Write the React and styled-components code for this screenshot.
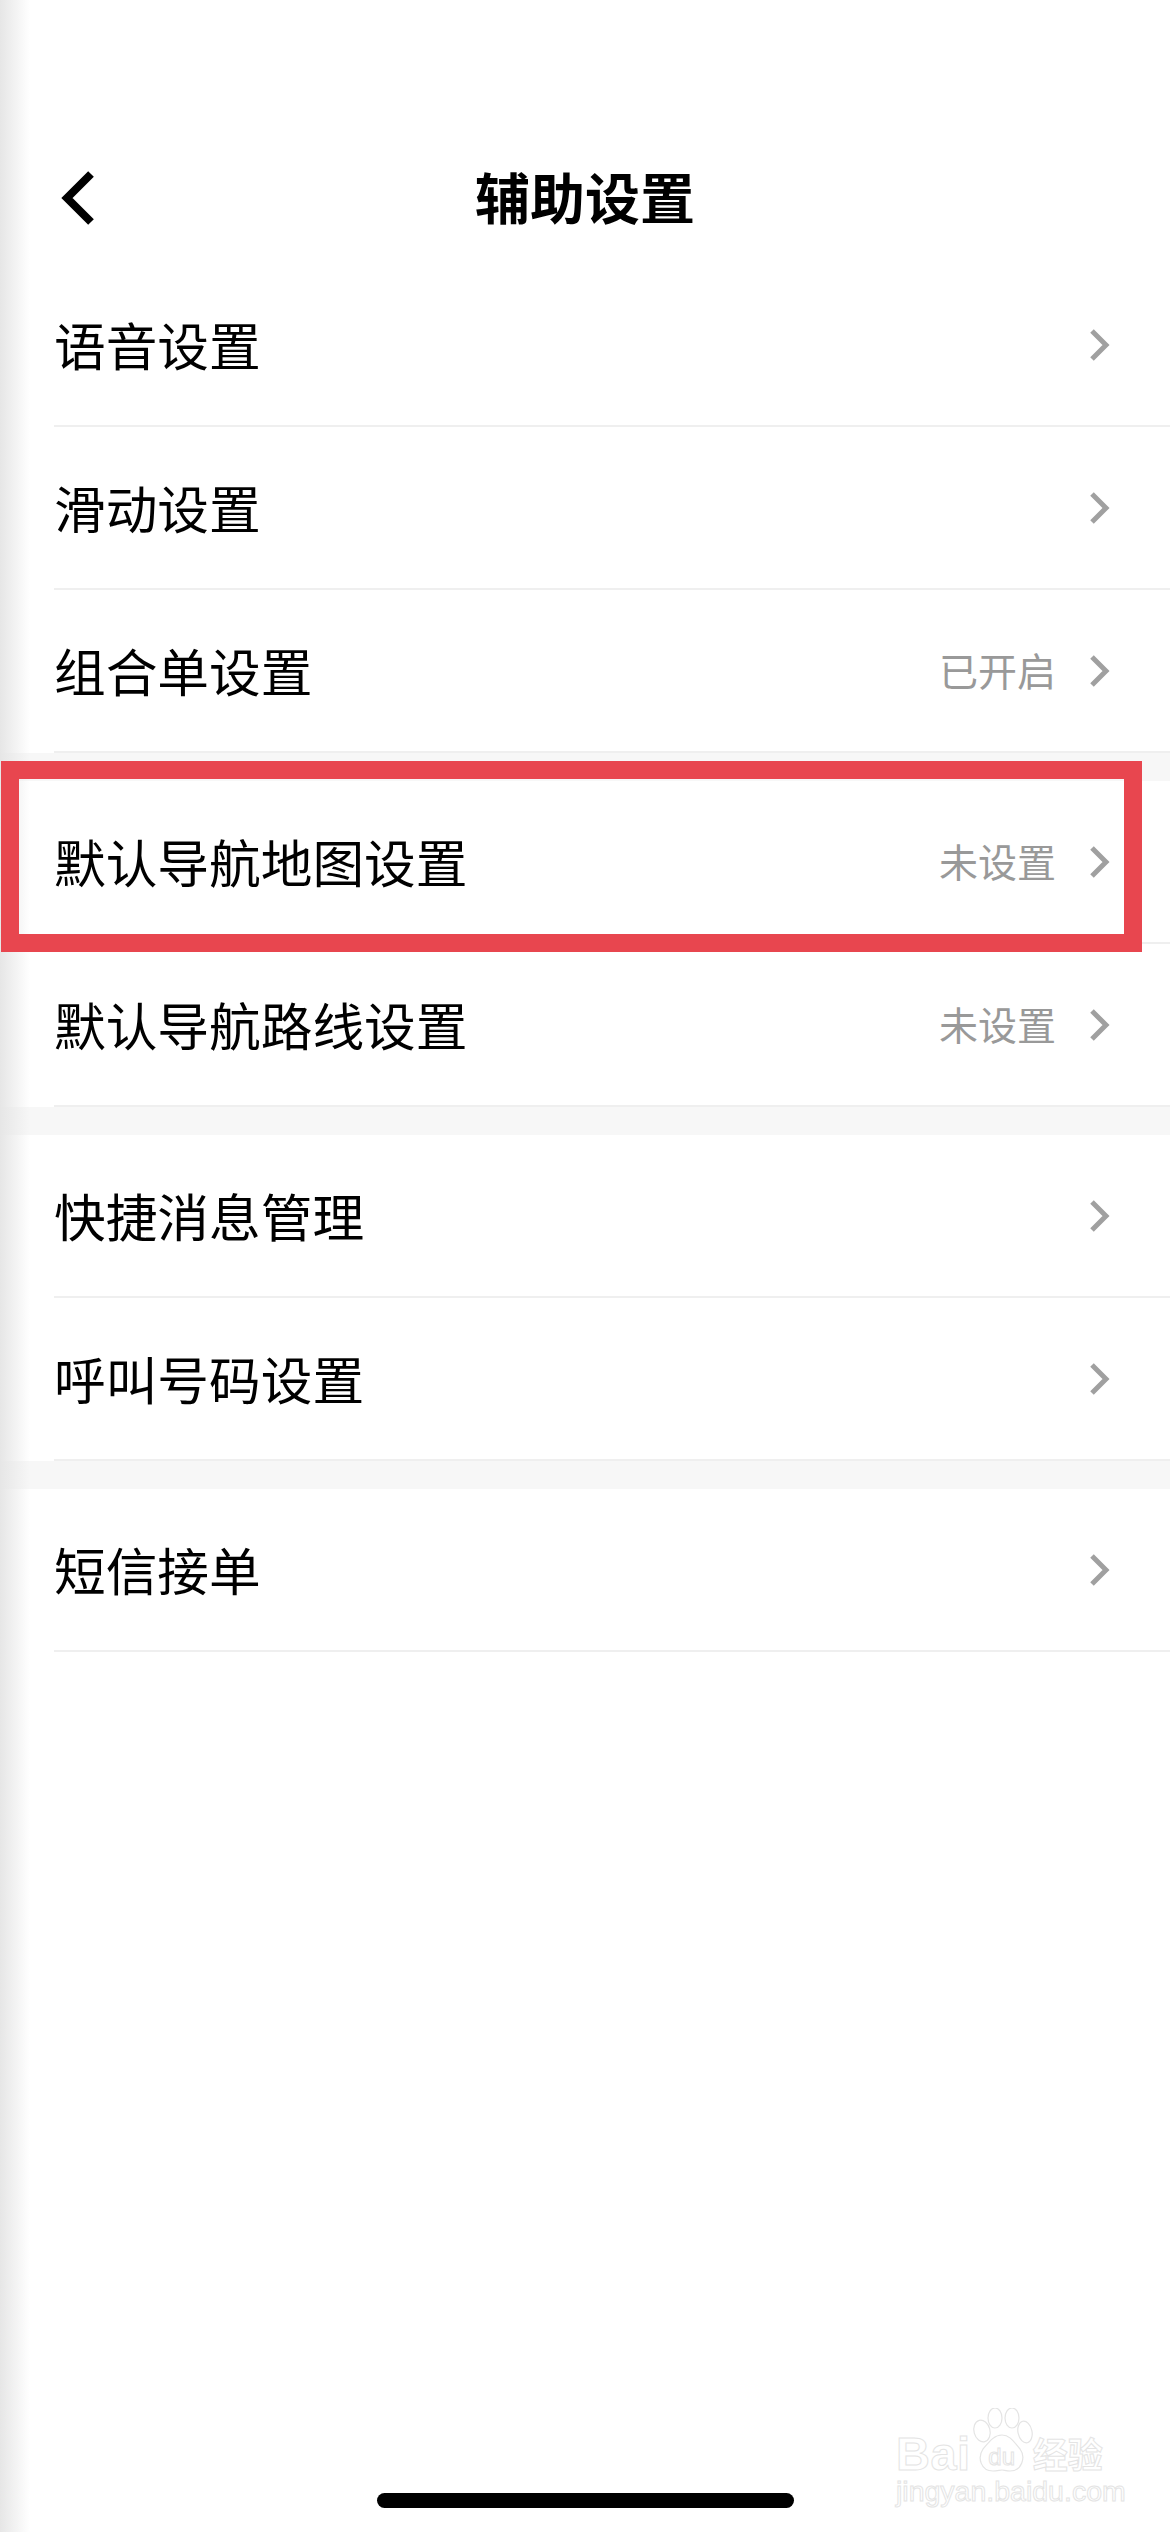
import React from 'react';
import styled, { createGlobalStyle } from 'styled-components';

const Global = createGlobalStyle`
  html, body { margin: 0; padding: 0; background: #fff; }
  body { font-family: "Noto Sans CJK SC", "Noto Sans", sans-serif; }
`;

const Page = styled.div`
  position: relative;
  width: 1170px;
  height: 2532px;
  overflow: hidden;
  background: #fff;
  display: flex;
  flex-direction: column;
`;

const Header = styled.header`
  height: 264px;
  box-sizing: border-box;
  padding-top: 162px;
  display: grid;
  grid-template-columns: 1fr auto 1fr;
  align-items: start;
`;

const BackIcon = styled.svg`
  width: 42px;
  height: 64px;
  margin: 4px 0 0 58px;
`;

const Title = styled.h1`
  margin: 0;
  font-size: 55px;
  line-height: 66px;
  font-weight: 700;
  color: #000;
`;

const List = styled.main`
  flex: 1;
`;

const Row = styled.div`
  height: 163px;
  box-sizing: border-box;
  margin-left: 54px;
  padding-right: 59px;
  display: flex;
  align-items: center;
  border-bottom: 2px solid #efefef;
`;

const Label = styled.span`
  flex: 1;
  font-size: 51.7px;
  line-height: 60px;
  margin-bottom: 2px;
  color: #000;
`;

const Value = styled.span`
  font-size: 39px;
  line-height: 50px;
  margin-bottom: 3px;
  color: #999;
  margin-right: 33px;
`;

const Chevron = styled.svg`
  width: 22px;
  height: 34px;
`;

const Gap = styled.div`
  height: 28px;
  background: #f7f7f7;
`;

const SideShadow = styled.div`
  position: absolute;
  inset: 0 auto 0 0;
  width: 30px;
  background: linear-gradient(to right, #e6e6e6, rgba(255, 255, 255, 0));
  pointer-events: none;
`;

const Highlight = styled.div`
  position: absolute;
  left: 1px;
  top: 761px;
  width: 1141px;
  height: 191px;
  box-sizing: border-box;
  border: 18px solid #e8464f;
  pointer-events: none;
`;

const Footer = styled.footer`
  position: relative;
  display: flex;
  justify-content: center;
  padding-bottom: 24px;
`;

const HomeBar = styled.div`
  width: 417px;
  height: 15px;
  border-radius: 8px;
  background: #000;
`;

const Watermark = styled.div`
  position: absolute;
  right: 64px;
  bottom: 26px;
  width: 210px;
  display: flex;
  flex-direction: column;
  gap: 2px;
  color: #fff;
`;

const BrandRow = styled.div`
  display: flex;
  align-items: flex-end;
  height: 70px;
`;

const Brand = styled.span`
  font-family: "Liberation Sans", sans-serif;
  font-weight: 700;
  font-size: 47px;
  line-height: 40px;
  letter-spacing: 0.5px;
  -webkit-text-stroke: 1px #e4e4e4;
`;

const PawBox = styled.div`
  position: relative;
  width: 62px;
  height: 66px;
  flex: none;
  display: flex;
  align-items: flex-end;
  justify-content: center;
`;

const Paw = styled.svg`
  position: absolute;
  inset: 0;
  width: 62px;
  height: 66px;
`;

const Du = styled.span`
  position: relative;
  font-family: "Liberation Sans", sans-serif;
  font-size: 24px;
  line-height: 26px;
  margin-bottom: 4px;
  -webkit-text-stroke: 1px #e4e4e4;
`;

const BrandCn = styled.span`
  font-size: 35px;
  line-height: 42px;
  font-weight: 700;
  white-space: nowrap;
  -webkit-text-stroke: 1px #e4e4e4;
`;

const WmUrl = styled.span`
  font-family: "Liberation Sans", sans-serif;
  font-size: 28.5px;
  line-height: 30px;
  white-space: nowrap;
  -webkit-text-stroke: 1px #e4e4e4;
`;

const Arrow = () => (
  <Chevron viewBox="0 0 22 34" fill="none">
    <polyline points="3,3 17,17 3,31" stroke="#a0a0a0" strokeWidth="5" />
  </Chevron>
);

const groups = [
  [
    { label: '语音设置' },
    { label: '滑动设置' },
    { label: '组合单设置', value: '已开启' },
  ],
  [
    { label: '默认导航地图设置', value: '未设置' },
    { label: '默认导航路线设置', value: '未设置' },
  ],
  [{ label: '快捷消息管理' }, { label: '呼叫号码设置' }],
  [{ label: '短信接单' }],
];

export default function App() {
  return (
    <Page>
      <Global />
      <Header>
        <BackIcon viewBox="0 0 42 64" fill="none">
          <polyline points="33,8 9,32 33,56" stroke="#000" strokeWidth="8" />
        </BackIcon>
        <Title>辅助设置</Title>
      </Header>
      <List>
        {groups.map((group, i) => (
          <React.Fragment key={i}>
            {i > 0 && <Gap />}
            {group.map((item) => (
              <Row key={item.label}>
                <Label>{item.label}</Label>
                {item.value && <Value>{item.value}</Value>}
                <Arrow />
              </Row>
            ))}
          </React.Fragment>
        ))}
      </List>
      <Footer>
        <HomeBar />
        <Watermark>
          <BrandRow>
            <Brand>Bai</Brand>
            <PawBox>
              <Paw viewBox="0 0 62 66" fill="#fff" stroke="#e4e4e4" strokeWidth="1.2">
                <ellipse cx="11" cy="23" rx="8" ry="11" transform="rotate(-15 11 23)" />
                <ellipse cx="24" cy="10" rx="7" ry="10" />
                <ellipse cx="41" cy="10" rx="7" ry="10" />
                <ellipse cx="54" cy="24" rx="7" ry="11" transform="rotate(-12 54 24)" />
                <path d="M31 27c8 0 12 7 18 14 6 8 2 22-10 22-4 0-6-1-8-1s-5 1-9 1C10 63 6 50 12 41c6-7 11-14 19-14z" />
              </Paw>
              <Du>du</Du>
            </PawBox>
            <BrandCn>经验</BrandCn>
          </BrandRow>
          <WmUrl>jingyan.baidu.com</WmUrl>
        </Watermark>
      </Footer>
      <SideShadow />
      <Highlight />
    </Page>
  );
}
